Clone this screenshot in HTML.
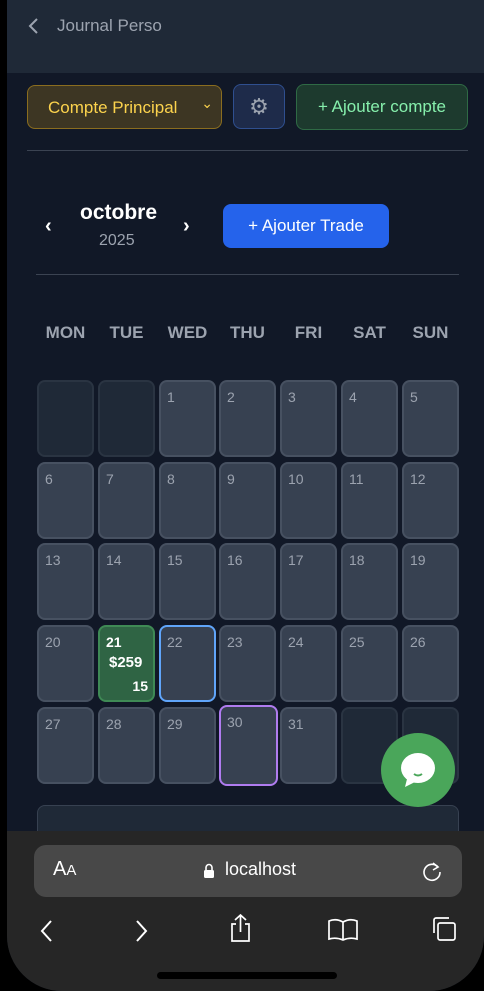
<!DOCTYPE html>
<html><head><meta charset="utf-8"><style>
*{margin:0;padding:0;box-sizing:border-box}
body{width:484px;height:991px;overflow:hidden;background:#000;font-family:"Liberation Sans",sans-serif;position:relative}
.screen{position:absolute;left:7px;top:0;width:477px;height:991px;background:#111827;overflow:hidden;border-bottom-left-radius:55px;border-bottom-right-radius:55px}
.hdr{position:absolute;left:0;top:0;width:477px;height:73px;background:#1f2937}
.abs{position:absolute}
.cell{position:absolute;width:57px;height:77px;border-radius:8px;background:#374151;border:2px solid #475161;color:#9ca3af;font-size:14px;padding:7px 0 0 6px}
.empty{background:#1f2937;border-color:#2a3442}
.dow{position:absolute;top:323px;width:57px;text-align:center;color:#9ca3af;font-size:17px;font-weight:bold}
.bar{position:absolute;left:0;top:831px;width:477px;height:160px;background:#262626}
</style></head><body>
<div class="screen">
<div class="hdr">
<svg class="abs" style="left:20px;top:16px" width="14" height="20"><path d="M10 3 L3 10 L10 17" stroke="#9ca3af" stroke-width="2" fill="none"/></svg>
<div class="abs" style="left:50px;top:16px;color:#9ca3af;font-size:17px">Journal Perso</div>
</div>
<div class="abs" style="left:20px;top:85px;width:195px;height:44px;border:1px solid #8a6d1f;background:#3d3623;border-radius:8px;color:#fcd34d;font-size:17px;padding:12px 0 0 20px">Compte Principal<span style="position:absolute;right:8px;top:9px;font-size:14px">⌄</span></div>
<div class="abs" style="left:226px;top:84px;width:52px;height:45px;border:1px solid #2f4f8f;background:#1e2b4a;border-radius:8px;color:#9ca3af;font-size:22px;text-align:center;line-height:43px">⚙</div>
<div class="abs" style="left:289px;top:84px;width:172px;height:46px;border:1px solid #2f6a45;background:#1d3a2e;border-radius:8px;color:#86efac;font-size:17px;text-align:center;line-height:44px">+ Ajouter compte</div>
<div class="abs" style="left:20px;top:150px;width:441px;height:1px;background:#3b4352"></div>
<div class="abs" style="left:38px;top:215px;color:#fff;font-size:20px;font-weight:bold">‹</div>
<div class="abs" style="left:73px;top:201px;color:#fff;font-size:21px;font-weight:bold">octobre</div>
<div class="abs" style="left:92px;top:232px;color:#9ca3af;font-size:16px">2025</div>
<div class="abs" style="left:176px;top:215px;color:#fff;font-size:20px;font-weight:bold">›</div>
<div class="abs" style="left:216px;top:204px;width:166px;height:44px;background:#2563eb;border-radius:8px;color:#fff;font-size:17px;text-align:center;line-height:44px">+ Ajouter Trade</div>
<div class="abs" style="left:29px;top:274px;width:423px;height:1px;background:#3b4352"></div>
<div class="dow" style="left:30px">MON</div><div class="dow" style="left:91px">TUE</div><div class="dow" style="left:152px">WED</div><div class="dow" style="left:212px">THU</div><div class="dow" style="left:273px">FRI</div><div class="dow" style="left:334px">SAT</div><div class="dow" style="left:395px">SUN</div>
<div class="cell empty" style="left:30px;top:380px"></div>
<div class="cell empty" style="left:91px;top:380px"></div>
<div class="cell" style="left:152px;top:380px">1</div>
<div class="cell" style="left:212px;top:380px">2</div>
<div class="cell" style="left:273px;top:380px">3</div>
<div class="cell" style="left:334px;top:380px">4</div>
<div class="cell" style="left:395px;top:380px">5</div>
<div class="cell" style="left:30px;top:462px">6</div>
<div class="cell" style="left:91px;top:462px">7</div>
<div class="cell" style="left:152px;top:462px">8</div>
<div class="cell" style="left:212px;top:462px">9</div>
<div class="cell" style="left:273px;top:462px">10</div>
<div class="cell" style="left:334px;top:462px">11</div>
<div class="cell" style="left:395px;top:462px">12</div>
<div class="cell" style="left:30px;top:543px">13</div>
<div class="cell" style="left:91px;top:543px">14</div>
<div class="cell" style="left:152px;top:543px">15</div>
<div class="cell" style="left:212px;top:543px">16</div>
<div class="cell" style="left:273px;top:543px">17</div>
<div class="cell" style="left:334px;top:543px">18</div>
<div class="cell" style="left:395px;top:543px">19</div>
<div class="cell" style="left:30px;top:625px">20</div>
<div class="cell" style="left:91px;top:625px;background:#2f6444;border-color:#3f8a55;color:#fff;font-weight:bold">21<div style="position:absolute;left:9px;top:27px;font-size:15px">$259</div><div style="position:absolute;right:5px;top:51px;font-size:14px">15</div></div>
<div class="cell" style="left:152px;top:625px;border-color:#60a5fa">22</div>
<div class="cell" style="left:212px;top:625px">23</div>
<div class="cell" style="left:273px;top:625px">24</div>
<div class="cell" style="left:334px;top:625px">25</div>
<div class="cell" style="left:395px;top:625px">26</div>
<div class="cell" style="left:30px;top:707px">27</div>
<div class="cell" style="left:91px;top:707px">28</div>
<div class="cell" style="left:152px;top:707px">29</div>
<div class="cell" style="left:212px;top:705px;height:81px;width:59px;border-color:#b07cf0">30</div>
<div class="cell" style="left:273px;top:707px">31</div>
<div class="cell empty" style="left:334px;top:707px"></div>
<div class="cell empty" style="left:395px;top:707px"></div>
<div class="abs" style="left:30px;top:805px;width:422px;height:60px;background:#1f2937;border:1px solid #374151;border-radius:8px"></div>
<div class="abs" style="left:374px;top:733px;width:74px;height:74px;border-radius:50%;background:#4aa65a"></div>
<svg class="abs" style="left:392px;top:749px" width="40" height="42"><ellipse cx="19" cy="19" rx="17" ry="15" fill="#fff"/><path d="M8 30 L6 38 L16 33 Z" fill="#fff"/><path d="M15 25 Q19 28 23 25" stroke="#4aa65a" stroke-width="2" fill="none"/></svg>
<div class="bar">
<div class="abs" style="left:27px;top:14px;width:428px;height:52px;background:#484848;border-radius:12px"></div>
<div class="abs" style="left:46px;top:27px;color:#fff;font-size:20px">A<span style="font-size:15px">A</span></div>
<svg class="abs" style="left:196px;top:32px" width="12" height="16"><path d="M3 7 V4.5 a3 3 0 0 1 6 0 V7" stroke="#fff" stroke-width="1.6" fill="none"/><rect x="1" y="7" width="10" height="8" rx="1.5" fill="#fff"/></svg>
<div class="abs" style="left:218px;top:28px;color:#fff;font-size:18px">localhost</div>
<svg class="abs" style="left:413px;top:28px" width="24" height="24"><path d="M18 8 A8 8 0 1 0 20 13" stroke="#fff" stroke-width="1.6" fill="none"/><path d="M13 4 L18 8 L13 11" stroke="#fff" stroke-width="1.6" fill="none"/></svg>
<svg class="abs" style="left:30px;top:87px" width="20" height="26"><path d="M14 3 L5 13 L14 23" stroke="#fff" stroke-width="2" fill="none"/></svg>
<svg class="abs" style="left:125px;top:87px" width="20" height="26"><path d="M5 3 L14 13 L5 23" stroke="#fff" stroke-width="2" fill="none"/></svg>
<svg class="abs" style="left:221px;top:82px" width="26" height="30"><path d="M8 11 H4 V28 H21 V11 H17 M12.5 19 V2 M7 7 L12.5 2 L18 7" stroke="#fff" stroke-width="1.7" fill="none"/></svg>
<svg class="abs" style="left:320px;top:86px" width="32" height="26"><path d="M2 4 Q9 1 16 5 Q23 1 30 4 V22 Q23 20 16 23 Q9 20 2 22 Z M16 5 V23" stroke="#fff" stroke-width="1.7" fill="none"/></svg>
<svg class="abs" style="left:423px;top:84px" width="28" height="28"><rect x="8" y="8" width="17" height="17" rx="2" stroke="#fff" stroke-width="1.7" fill="none"/><path d="M4 18 V5 a2 2 0 0 1 2 -2 H19" stroke="#fff" stroke-width="1.7" fill="none"/></svg>
<div class="abs" style="left:150px;top:141px;width:180px;height:7px;background:#000;border-radius:4px"></div>
</div>
</div>
</body></html>
